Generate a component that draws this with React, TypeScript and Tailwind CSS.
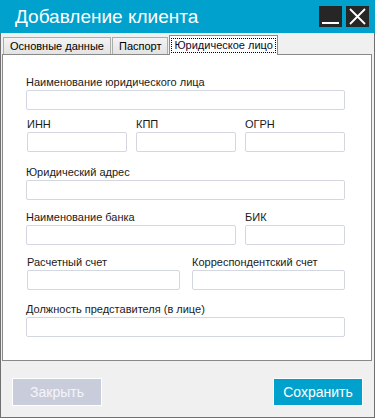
import type { ReactNode } from "react";

const inputClasses =
  "block h-[20px] w-full rounded-[2px] border border-[#d3d8e0] bg-white";

function Field({ label, className }: { label: string; className?: string }) {
  return (
    <div className={className}>
      <div className="h-[14px] text-[11px] leading-[14px] text-[#1a1a1a] whitespace-nowrap">
        {label}
      </div>
      <div className="mt-[1px]">
        <input className={inputClasses} />
      </div>
    </div>
  );
}

function Tab({ children, active }: { children: ReactNode; active?: boolean }) {
  if (active) {
    return (
      <div className="relative z-10 -mb-px flex h-[20px] items-center border border-b-0 border-[#8c8c8c] bg-white px-[2px]">
        <span className="px-[2px] text-[11px] leading-[13px] text-[#0a0a2a] outline-1 outline-dotted outline-black">
          {children}
        </span>
      </div>
    );
  }
  return (
    <div className="flex h-[17px] items-center border border-b-0 border-[#acacac] bg-gradient-to-b from-[#f3f3f3] to-[#e3e3e3] px-[6px] text-[11px] leading-[14px] text-black">
      {children}
    </div>
  );
}

export default function App() {
  return (
    <div className="flex h-[418px] w-[375px] flex-col border-x border-b border-[#707070] bg-[#f0f0f0] font-['Liberation_Sans',Arial,sans-serif]">
      <div className="-mx-px flex h-[33px] shrink-0 items-center bg-[#00a2cd] pl-[15px] pr-[6px]">
        <h1 className="text-[19px] leading-none text-white">Добавление клиента</h1>
        <div className="ml-auto flex gap-[4px]">
          <div className="flex h-[21px] w-[23px] items-end justify-center bg-[#262626] pb-[3px]">
            <div className="h-[2px] w-[17px] bg-white" />
          </div>
          <div className="flex h-[21px] w-[23px] items-center justify-center bg-[#262626]">
            <svg width="19" height="19" viewBox="0 0 19 19">
              <path d="M2 2L17 17M17 2L2 17" stroke="white" strokeWidth="1.8" />
            </svg>
          </div>
        </div>
      </div>

      <div className="flex h-[21px] shrink-0 items-end gap-px pl-[2px]">
        <Tab>Основные данные</Tab>
        <Tab>Паспорт</Tab>
        <Tab active>Юридическое лицо</Tab>
      </div>

      <div className="ml-px mr-[2px] flex-1 border border-[#898989] bg-white pl-[23px] pt-[20px]">
        <div className="flex w-[319px] flex-col">
          <Field label="Наименование юридического лица" />
          <div className="mt-[7px] grid grid-cols-3 gap-[9px] pl-px">
            <Field label="ИНН" />
            <Field label="КПП" />
            <Field label="ОГРН" />
          </div>
          <Field label="Юридический адрес" className="mt-[13px]" />
          <div className="mt-[10px] flex gap-[9px]">
            <Field label="Наименование банка" className="w-[210px]" />
            <Field label="БИК" className="w-[100px]" />
          </div>
          <div className="mt-[10px] grid grid-cols-2 gap-[12px] pl-px">
            <Field label="Расчетный счет" />
            <Field label="Корреспондентский счет" />
          </div>
          <Field label="Должность представителя (в лице)" className="mt-[12px]" />
        </div>
      </div>

      <div className="flex h-[56px] shrink-0 items-start justify-between px-[11px] pt-[17px]">
        <button className="h-[28px] w-[90px] border border-white bg-[#c9ccda] text-[14px] text-[#f4f5fa]">
          Закрыть
        </button>
        <button className="h-[28px] w-[90px] border border-white bg-[#00a2cd] text-[14px] text-white">
          Сохранить
        </button>
      </div>
    </div>
  );
}
